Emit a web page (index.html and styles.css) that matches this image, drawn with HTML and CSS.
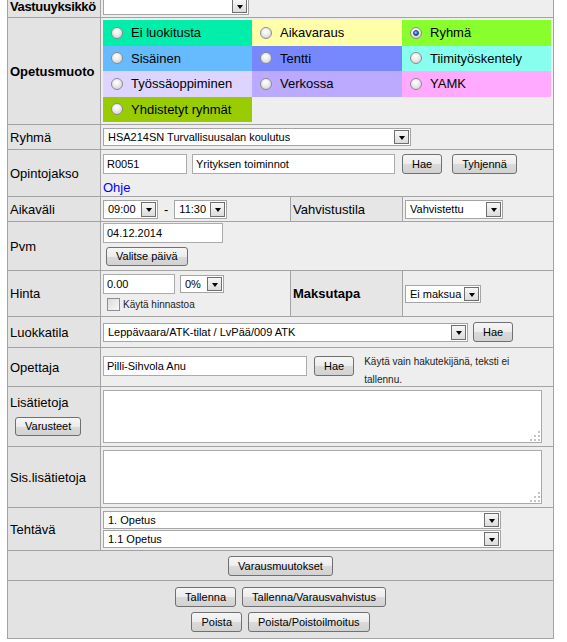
FILE: index.html
```html
<!DOCTYPE html>
<html lang="fi">
<head>
<meta charset="utf-8">
<title>Varaus</title>
<link rel="stylesheet" href="styles.css">
</head>
<body>
<div class="form">
  <!-- Vastuuyksikkö -->
  <div class="lbl bold tight">Vastuuyksikkö</div>
  <div class="val span3">
    <div class="sel w-unit"><span class="txt"></span><span class="arr"></span></div>
  </div>

  <!-- Opetusmuoto -->
  <div class="lbl bold">Opetusmuoto</div>
  <div class="val span3 top pt2">
    <div class="types">
      <div class="opt c-ei"><span class="radio"></span>Ei luokitusta</div>
      <div class="opt c-aika"><span class="radio"></span>Aikavaraus</div>
      <div class="opt c-ryhma"><span class="radio on"></span>Ryhmä</div>
      <div class="opt c-sis"><span class="radio"></span>Sisäinen</div>
      <div class="opt c-tentti"><span class="radio"></span>Tentti</div>
      <div class="opt c-tiimi"><span class="radio"></span>Tiimityöskentely</div>
      <div class="opt c-tyo"><span class="radio"></span>Työssäoppiminen</div>
      <div class="opt c-verkko"><span class="radio"></span>Verkossa</div>
      <div class="opt c-yamk"><span class="radio"></span>YAMK</div>
      <div class="opt c-yhd"><span class="radio"></span>Yhdistetyt ryhmät</div>
    </div>
  </div>

  <!-- Ryhmä -->
  <div class="lbl">Ryhmä</div>
  <div class="val span3">
    <div class="sel w-ryhma"><span class="txt">HSA214SN Turvallisuusalan koulutus</span><span class="arr"></span></div>
  </div>

  <!-- Opintojakso -->
  <div class="lbl">Opintojakso</div>
  <div class="val span3 col pt4">
    <div class="line">
      <input class="inp w-code" type="text" value="R0051">
      <input class="inp w-name" type="text" value="Yrityksen toiminnot">
      <button class="btn ml7" type="button">Hae</button>
      <button class="btn ml10" type="button">Tyhjennä</button>
    </div>
    <a class="ohje" href="#">Ohje</a>
  </div>

  <!-- Aikaväli / Vahvistustila -->
  <div class="lbl">Aikaväli</div>
  <div class="val">
    <div class="sel sel19 w-t1"><span class="txt">09:00</span><span class="arr"></span></div>
    <span class="dash">-</span>
    <div class="sel sel19 w-t2"><span class="txt">11:30</span><span class="arr"></span></div>
  </div>
  <div class="lbl lbl2">Vahvistustila</div>
  <div class="val">
    <div class="sel sel19 w-vahv"><span class="txt">Vahvistettu</span><span class="arr"></span></div>
  </div>

  <!-- Pvm -->
  <div class="lbl">Pvm</div>
  <div class="val span3 col pt1">
    <input class="inp w-date" type="text" value="04.12.2014">
    <button class="btn btn19 mt4 ml3" type="button">Valitse päivä</button>
  </div>

  <!-- Hinta / Maksutapa -->
  <div class="lbl">Hinta</div>
  <div class="val col pt3">
    <div class="line">
      <input class="inp w-price" type="text" value="0.00">
      <div class="sel w-pct ml5"><span class="txt">0%</span><span class="arr"></span></div>
    </div>
    <label class="chk-line"><span class="chk"></span>Käytä hinnastoa</label>
  </div>
  <div class="lbl lbl2 bold">Maksutapa</div>
  <div class="val">
    <div class="sel w-maksu"><span class="txt">Ei maksua</span><span class="arr"></span></div>
  </div>

  <!-- Luokkatila -->
  <div class="lbl">Luokkatila</div>
  <div class="val span3">
    <div class="sel sel19 w-luokka"><span class="txt">Leppävaara/ATK-tilat / LvPää/009 ATK</span><span class="arr"></span></div>
    <button class="btn ml5" type="button">Hae</button>
  </div>

  <!-- Opettaja -->
  <div class="lbl">Opettaja</div>
  <div class="val span3 top pt8">
    <input class="inp w-teacher" type="text" value="Pilli-Sihvola Anu">
    <button class="btn ml7" type="button">Hae</button>
    <div class="note">Käytä vain hakutekijänä, teksti ei tallennu.</div>
  </div>

  <!-- Lisätietoja -->
  <div class="lbl col top pt8">
    <span class="lbl-text">Lisätietoja</span>
    <button class="btn btn19 mt7 ml5" type="button">Varusteet</button>
  </div>
  <div class="val span3 top pt3">
    <div class="ta h53">
      <textarea></textarea>
      <svg class="grip" width="10" height="10" viewBox="0 0 10 10" aria-hidden="true"><rect x="8" y="0" width="2" height="2"/><rect x="4" y="4" width="2" height="2"/><rect x="8" y="4" width="2" height="2"/><rect x="0" y="8" width="2" height="2"/><rect x="4" y="8" width="2" height="2"/><rect x="8" y="8" width="2" height="2"/></svg>
    </div>
  </div>

  <!-- Sis.lisätietoja -->
  <div class="lbl">Sis.lisätietoja</div>
  <div class="val span3 top pt3">
    <div class="ta h54">
      <textarea></textarea>
      <svg class="grip" width="10" height="10" viewBox="0 0 10 10" aria-hidden="true"><rect x="8" y="0" width="2" height="2"/><rect x="4" y="4" width="2" height="2"/><rect x="8" y="4" width="2" height="2"/><rect x="0" y="8" width="2" height="2"/><rect x="4" y="8" width="2" height="2"/><rect x="8" y="8" width="2" height="2"/></svg>
    </div>
  </div>

  <!-- Tehtävä -->
  <div class="lbl">Tehtävä</div>
  <div class="val span3 col pt3 gap1">
    <div class="sel w-task"><span class="txt">1. Opetus</span><span class="arr"></span></div>
    <div class="sel w-task"><span class="txt">1.1 Opetus</span><span class="arr"></span></div>
  </div>

  <!-- Varausmuutokset -->
  <div class="bar full">
    <button class="btn" type="button">Varausmuutokset</button>
  </div>

  <!-- Actions -->
  <div class="bar full actions">
    <div class="btn-row">
      <button class="btn" type="button">Tallenna</button>
      <button class="btn" type="button">Tallenna/Varausvahvistus</button>
    </div>
    <div class="btn-row">
      <button class="btn" type="button">Poista</button>
      <button class="btn" type="button">Poista/Poistoilmoitus</button>
    </div>
  </div>
</div>
</body>
</html>
```

FILE: styles.css
```css
html, body {
  margin: 0;
  padding: 0;
  background: #ffffff;
}

body {
  font-family: "Liberation Sans", Arial, sans-serif;
  font-size: 13px;
  color: #000;
}

.form {
  display: grid;
  grid-template-columns: 92px 189px 111px 150px;
  grid-template-rows: 22px 106px 24px 46px 24px 48px 45px 30px 38px 59px 60px 42px 29px 57px;
  gap: 1px;
  width: max-content;
  margin: -6px 0 0 7px;
  border: 1px solid #a3a3a3;
  background: #a3a3a3;
}

.lbl {
  background: #e3e3e3;
  display: flex;
  align-items: center;
  padding-left: 2px;
  font-size: 13px;
  white-space: nowrap;
  overflow: hidden;
}

.lbl2 {
  background: #e6e6e6;
}

.bold {
  font-weight: bold;
}

.tight {
  letter-spacing: -0.35px;
}

.val {
  background: #eeeeee;
  display: flex;
  align-items: center;
  padding-left: 2px;
  min-width: 0;
}

.span3 {
  grid-column: span 3;
}

.full {
  grid-column: 1 / -1;
}

.line {
  display: flex;
  align-items: center;
}

/* Opetusmuoto colour grid */
.types {
  display: grid;
  grid-template-columns: 149px 150px 149px;
  grid-auto-rows: 25.5px;
}

.opt {
  display: flex;
  align-items: center;
  padding-left: 8px;
  font-size: 13px;
  white-space: nowrap;
}

.c-ei { background: #00eeaa; }
.c-aika { background: #ffffaa; }
.c-ryhma { background: #88ff2c; }
.c-sis { background: #66bbff; }
.c-tentti { background: #7788ff; }
.c-tiimi { background: #88ffee; }
.c-tyo { background: #ddd4ff; }
.c-verkko { background: #bbaaff; }
.c-yamk { background: #ffaaff; }
.c-yhd { background: #99cc00; }

.radio {
  position: relative;
  width: 12px;
  height: 12px;
  box-sizing: border-box;
  border-radius: 50%;
  border: 1px solid #8c8c8c;
  background: radial-gradient(circle at 45% 35%, #ffffff 0%, #f0f0f0 35%, #c9c9c9 100%);
  margin-right: 8px;
  flex: none;
}

.radio.on::after {
  content: "";
  position: absolute;
  left: 2px;
  top: 2px;
  width: 6px;
  height: 6px;
  box-sizing: border-box;
  border-radius: 50%;
  border: 1px solid #1d3f66;
  background: radial-gradient(circle at 40% 35%, #8fd0ff 0%, #2a78c8 55%, #0d3f7a 100%);
}

/* Selects */
.sel {
  display: flex;
  height: 18px;
  box-sizing: border-box;
  border: 1px solid #a5a5a5;
  background: #ffffff;
  font-size: 11px;
  flex: none;
}

.sel19 {
  height: 19px;
}

.sel .txt {
  flex: 1;
  min-width: 0;
  padding-left: 4px;
  display: flex;
  align-items: center;
  white-space: nowrap;
  overflow: hidden;
}

.sel .arr {
  position: relative;
  width: 15px;
  margin: 1px;
  box-sizing: border-box;
  border: 1px solid #6f6f6f;
  background: linear-gradient(#f7f7f7, #dcdcdc);
  flex: none;
}

.sel .arr::after {
  content: "";
  position: absolute;
  left: 50%;
  top: 50%;
  margin-left: -3px;
  margin-top: -1px;
  border-left: 3.5px solid transparent;
  border-right: 3.5px solid transparent;
  border-top: 4px solid #000;
}

.w-unit { width: 146px; }
.w-ryhma { width: 308px; }
.w-t1 { width: 55px; }
.w-t2 { width: 53px; }
.w-vahv { width: 98px; }
.w-pct { width: 44px; }
.w-maksu { width: 76px; }
.w-luokka { width: 365px; }
.w-task { width: 398px; }

.dash {
  margin: 0 6px;
  font-size: 13px;
}

/* Inputs */
.inp {
  height: 20px;
  box-sizing: border-box;
  border: 1px solid #ababab;
  background: #ffffff;
  font-family: "Liberation Sans", Arial, sans-serif;
  font-size: 11px;
  padding: 0 3px;
  margin: 0;
  color: #000;
  flex: none;
}

.w-code { width: 84px; margin-right: 5px; }
.w-name { width: 203px; }
.w-date { width: 120px; }
.w-price { width: 72px; }
.w-teacher { width: 204px; }

/* Buttons */
.btn {
  height: 20px;
  box-sizing: border-box;
  border: 1px solid #707070;
  border-radius: 3px;
  background: linear-gradient(#f6f6f6 0%, #ececec 50%, #dadada 51%, #d2d2d2 100%);
  font-family: "Liberation Sans", Arial, sans-serif;
  font-size: 11px;
  color: #000;
  padding: 0 9px;
  margin: 0;
  line-height: 18px;
  flex: none;
  cursor: pointer;
}

.btn19 {
  height: 19px;
  line-height: 17px;
}

.ohje {
  margin-top: 6px;
  line-height: 15px;
  font-size: 13px;
  color: #0000ff;
  text-decoration: none;
}

.chk-line {
  display: flex;
  align-items: center;
  margin-top: 4px;
  margin-left: 4px;
  font-size: 10px;
  color: #222;
}

.chk {
  width: 13px;
  height: 13px;
  box-sizing: border-box;
  border: 1px solid #8e8e8e;
  background: linear-gradient(135deg, #dcdcdc, #f7f7f7);
  margin-right: 3px;
}

.note {
  width: 180px;
  margin-left: 10px;
  margin-top: -3px;
  font-size: 10px;
  line-height: 18px;
  color: #222;
}

.lbl-text {
  line-height: 15px;
}

/* Text areas */
.ta {
  position: relative;
  width: 439px;
}

.h53 { height: 53px; }
.h54 { height: 54px; }

.ta textarea {
  display: block;
  width: 100%;
  height: 100%;
  box-sizing: border-box;
  margin: 0;
  border: 1px solid #a9a9a9;
  background: #ffffff;
  resize: none;
}

.grip {
  position: absolute;
  right: 2px;
  bottom: 2px;
  fill: #c4c4c4;
}

/* Bottom bars */
.bar {
  background: #e3e3e3;
  display: flex;
  align-items: center;
  justify-content: center;
}

.actions {
  flex-direction: column;
  justify-content: flex-start;
  padding-top: 6px;
  gap: 5px;
}

.btn-row {
  display: flex;
  gap: 6px;
}

/* Layout utilities (kept last so they win over component defaults) */
.top {
  align-items: flex-start;
}

.col {
  flex-direction: column;
  align-items: flex-start;
  justify-content: flex-start;
}

.pt1 { padding-top: 1px; }
.pt2 { padding-top: 2px; }
.pt3 { padding-top: 3px; }
.pt4 { padding-top: 4px; }
.pt8 { padding-top: 8px; }
.gap1 { gap: 1px; }
.ml3 { margin-left: 3px; }
.ml5 { margin-left: 5px; }
.ml7 { margin-left: 7px; }
.ml10 { margin-left: 10px; }
.mt4 { margin-top: 4px; }
.mt7 { margin-top: 7px; }
```
